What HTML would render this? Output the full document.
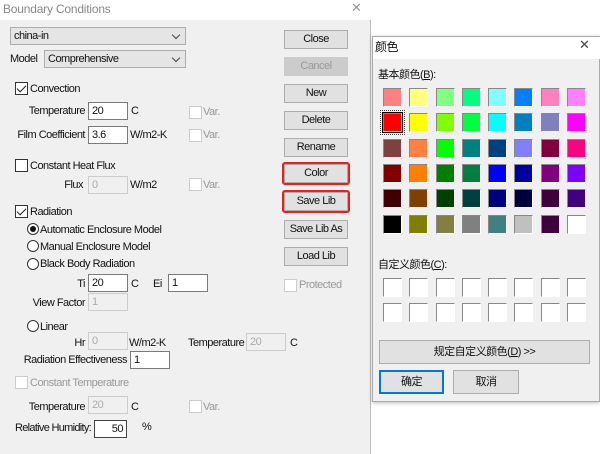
<!DOCTYPE html>
<html><head><meta charset="utf-8"><style>
*{box-sizing:border-box;margin:0;padding:0}
body{width:600px;height:454px;overflow:hidden;background:#fff;position:relative;font-family:"Liberation Sans","Noto Sans CJK SC",sans-serif;font-size:11px;color:#111;letter-spacing:-0.5px}
.a{position:absolute}
.t{position:absolute;white-space:nowrap;line-height:12px}
.r{text-align:right}
.g{color:#999}
.in{position:absolute;background:#fff;border:1px solid #7a7a7a;height:18px;padding:1px 3px;line-height:14px}
.dis{background:#f0f0f0;border-color:#ccc;color:#aaa}
.cb{position:absolute;width:13px;height:13px;border:1px solid #333;background:#fff}
.cbd{border-color:#ccc}
.ck::after{content:"";position:absolute;left:3px;top:0px;width:4px;height:8px;border:solid #222;border-width:0 1.5px 1.5px 0;transform:rotate(45deg)}
.rd{position:absolute;width:12px;height:12px;border:1px solid #333;border-radius:50%;background:#fff}
.rd.on::after{content:"";position:absolute;left:2px;top:2px;width:6px;height:6px;border-radius:50%;background:#111}
.btn{position:absolute;left:284px;width:64px;height:19px;background:#e1e1e1;border:1px solid #adadad;text-align:center;line-height:17px}
.red{outline:2px solid #e8201a;outline-offset:0px;border-radius:1px}
.combo{position:absolute;background:#e5e5e5;border:1px solid #adadad;padding-left:3px;line-height:16px}
.combo::after{content:"";position:absolute;right:6px;top:4px;width:5px;height:5px;border:solid #444;border-width:0 1px 1px 0;transform:rotate(45deg)}
.sw{position:absolute;width:19px;height:19px;border:1px solid;border-color:#888 #fff #fff #888}
</style></head><body>
<div class="a" style="left:0;top:0;width:371px;height:454px;background:#f0f0f0;border-right:1px solid #bbb"></div>
<div class="a" style="left:0;top:0;width:371px;height:20px;background:#fff"></div>
<div class="t g" style="left:3px;top:3px;font-size:12px;color:#888;letter-spacing:-0.2px">Boundary Conditions</div>
<div class="t" style="left:351px;top:2px;font-size:13px;color:#999">✕</div>

<div class="combo" style="left:10px;top:27px;width:176px;height:18px">china-in</div>
<div class="t" style="left:10px;top:53px">Model</div>
<div class="combo" style="left:44px;top:50px;width:142px;height:18px">Comprehensive</div>

<div class="cb ck" style="left:15px;top:82px"></div><div class="t" style="left:30px;top:83px">Convection</div>
<div class="t r" style="left:0;width:85px;top:105px">Temperature</div><div class="in" style="left:88px;top:102px;width:40px">20</div><div class="t" style="left:131px;top:105px">C</div>
<div class="cb cbd" style="left:189px;top:106px"></div><div class="t g" style="left:203px;top:106px">Var.</div>
<div class="t r" style="left:0;width:85px;top:129px">Film Coefficient</div><div class="in" style="left:88px;top:126px;width:40px">3.6</div><div class="t" style="left:130px;top:129px">W/m2-K</div>
<div class="cb cbd" style="left:189px;top:129px"></div><div class="t g" style="left:203px;top:129px">Var.</div>

<div class="cb" style="left:15px;top:159px"></div><div class="t" style="left:30px;top:160px">Constant Heat Flux</div>
<div class="t r" style="left:0;width:83px;top:179px">Flux</div><div class="in dis" style="left:88px;top:176px;width:40px">0</div><div class="t" style="left:130px;top:179px">W/m2</div>
<div class="cb cbd" style="left:189px;top:178px"></div><div class="t g" style="left:203px;top:179px">Var.</div>

<div class="cb ck" style="left:15px;top:205px"></div><div class="t" style="left:30px;top:206px">Radiation</div>
<div class="rd on" style="left:27px;top:223px"></div><div class="t" style="left:40px;top:224px">Automatic Enclosure Model</div>
<div class="rd" style="left:27px;top:240px"></div><div class="t" style="left:40px;top:241px">Manual Enclosure Model</div>
<div class="rd" style="left:27px;top:258px"></div><div class="t" style="left:40px;top:258px">Black Body Radiation</div>
<div class="t r" style="left:0;width:85px;top:278px">Ti</div><div class="in" style="left:88px;top:274px;width:40px">20</div><div class="t" style="left:131px;top:278px">C</div>
<div class="t" style="left:153px;top:278px">Ei</div><div class="in" style="left:168px;top:274px;width:40px">1</div>
<div class="t r" style="left:0;width:85px;top:297px">View Factor</div><div class="in dis" style="left:88px;top:293px;width:40px">1</div>
<div class="rd" style="left:27px;top:320px"></div><div class="t" style="left:40px;top:321px">Linear</div>
<div class="t r" style="left:0;width:85px;top:337px">Hr</div><div class="in dis" style="left:88px;top:332px;width:40px">0</div><div class="t" style="left:129px;top:337px">W/m2-K</div>
<div class="t" style="left:188px;top:337px">Temperature</div><div class="in dis" style="left:246px;top:333px;width:40px">20</div><div class="t" style="left:290px;top:337px">C</div>
<div class="t r" style="left:0;width:127px;top:354px">Radiation Effectiveness</div><div class="in" style="left:130px;top:351px;width:40px">1</div>

<div class="cb cbd" style="left:15px;top:376px"></div><div class="t g" style="left:30px;top:377px">Constant Temperature</div>
<div class="t r" style="left:0;width:85px;top:401px">Temperature</div><div class="in dis" style="left:88px;top:396px;width:40px">20</div><div class="t" style="left:131px;top:401px">C</div>
<div class="cb cbd" style="left:189px;top:400px"></div><div class="t g" style="left:203px;top:401px">Var.</div>
<div class="t" style="left:15px;top:422px;letter-spacing:-0.7px">Relative Humidity:</div><div class="in r" style="left:94px;top:420px;width:33px;border-color:#444">50</div><div class="t" style="left:142px;top:421px">%</div>

<div class="btn" style="top:30px">Close</div>
<div class="btn" style="top:57px;color:#999;background:#ccc;border-color:#ccc">Cancel</div>
<div class="btn" style="top:84px">New</div>
<div class="btn" style="top:111px">Delete</div>
<div class="btn" style="top:138px">Rename</div>
<div class="btn red" style="top:164px">Color</div>
<div class="btn red" style="top:192px">Save Lib</div>
<div class="btn" style="top:220px">Save Lib As</div>
<div class="btn" style="top:247px">Load Lib</div>
<div class="cb cbd" style="left:284px;top:279px"></div><div class="t g" style="left:299px;top:279px">Protected</div>

<div class="a" style="left:372px;top:36px;width:228px;height:366px;background:#f0f0f0;border:1px solid #aaa;box-shadow:0 1px 4px rgba(0,0,0,.25)"></div>
<div class="a" style="left:373px;top:37px;width:227px;height:22px;background:#fff"></div>
<div class="t" style="left:375px;top:41px;font-size:12px">颜色</div>
<div class="t" style="left:579px;top:39px;font-size:13px;color:#444">✕</div>
<div class="t" style="left:378px;top:69px">基本颜色(<u>B</u>):</div>
<div id="sw"></div>
<div class="t" style="left:378px;top:259px">自定义颜色(<u>C</u>):</div>
<div class="a" style="left:379px;top:340px;width:211px;height:24px;background:#e1e1e1;border:1px solid #adadad;text-align:center;line-height:22px">规定自定义颜色(<u>D</u>) &gt;&gt;</div>
<div class="a" style="left:379px;top:370px;width:65px;height:24px;background:#e1e1e1;border:2px solid #0078d7;text-align:center;line-height:20px">确定</div>
<div class="a" style="left:453px;top:370px;width:66px;height:24px;background:#e1e1e1;border:1px solid #adadad;text-align:center;line-height:22px">取消</div>
<script>
var c=["#ff8080","#ffff80","#80ff80","#00ff80","#80ffff","#0080ff","#ff80c0","#ff80ff",
"#ff0000","#ffff00","#80ff00","#00ff40","#00ffff","#0080c0","#8080c0","#ff00ff",
"#804040","#ff8040","#00ff00","#008080","#004080","#8080ff","#800040","#ff0080",
"#800000","#ff8000","#008000","#008040","#0000ff","#0000a0","#800080","#8000ff",
"#400000","#804000","#004000","#004040","#000080","#000040","#400040","#400080",
"#000000","#808000","#808040","#808080","#408080","#c0c0c0","#400040","#ffffff"];
var xs=[383,409,436,462,488,514,541,567],h="";
for(var i=0;i<48;i++){var r=Math.floor(i/8),x=xs[i%8],y=88+r*25.3;
h+='<div class="sw" style="left:'+x+'px;top:'+y+'px;background:'+c[i]+'"></div>';}
for(var i=0;i<16;i++){var r=Math.floor(i/8),x=xs[i%8],y=278+r*25;
h+='<div class="sw" style="left:'+x+'px;top:'+y+'px;background:#fff"></div>';}
h+='<div class="a" style="left:380px;top:110px;width:25px;height:25px;border:1px dotted #444"></div><div class="a" style="left:382px;top:112px;width:21px;height:21px;border:1px solid #000"></div>';
document.getElementById("sw").innerHTML=h;
</script>
</body></html>
